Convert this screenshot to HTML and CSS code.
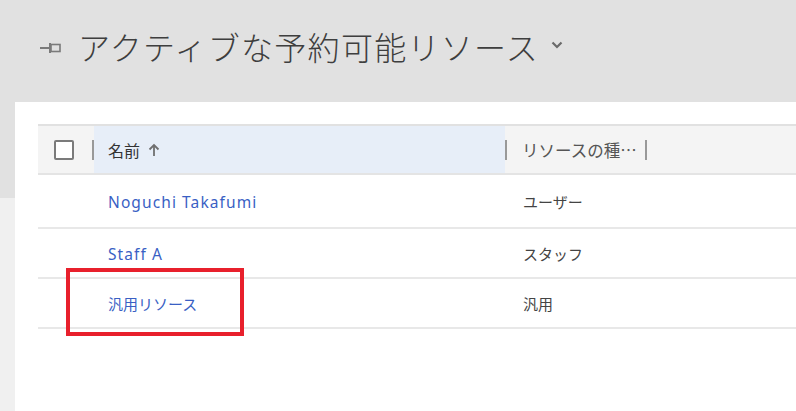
FILE: index.html
```html
<!DOCTYPE html>
<html lang="ja">
<head>
<meta charset="utf-8">
<link rel="stylesheet" href="styles.css">
</head>
<body>
<div class="page">
  <header class="titlebar">
    <svg class="pin" width="26" height="14" viewBox="0 0 26 14">
      <line x1="2" y1="7" x2="11" y2="7" stroke="#7a7a7a" stroke-width="2"/>
      <line x1="12" y1="2" x2="12" y2="12" stroke="#7a7a7a" stroke-width="2"/>
      <rect x="13" y="3.5" width="9" height="7" fill="none" stroke="#7a7a7a" stroke-width="1.6"/>
    </svg>
    <h1 class="title">アクティブな予約可能リソース</h1>
    <svg class="chev" width="12" height="8" viewBox="0 0 12 8">
      <polyline points="1.5,1.5 6,6 10.5,1.5" fill="none" stroke="#6a6a6a" stroke-width="2.2"/>
    </svg>
  </header>
  <div class="body">
    <div class="side"></div>
    <main class="panel">
      <div class="grid">
        <div class="row head">
          <div class="c-check"><span class="box"></span><span class="sep"></span></div>
          <div class="c-name">名前
            <svg class="arrow" width="12" height="14" viewBox="0 0 12 14">
              <line x1="6" y1="2" x2="6" y2="13" stroke="#6f6f6f" stroke-width="1.8"/>
              <polyline points="1.5,6.5 6,2 10.5,6.5" fill="none" stroke="#6f6f6f" stroke-width="1.8"/>
            </svg>
          </div>
          <div class="c-type"><span class="sep"></span><span class="htext">リソースの種…</span><span class="sep"></span></div>
        </div>
        <div class="row first">
          <div class="c-check"></div>
          <div class="c-name"><span class="link">Noguchi Takafumi</span></div>
          <div class="c-type"><span class="val">ユーザー</span></div>
        </div>
        <div class="row">
          <div class="c-check"></div>
          <div class="c-name"><span class="link">Staff A</span></div>
          <div class="c-type"><span class="val">スタッフ</span></div>
        </div>
        <div class="row">
          <div class="c-check"></div>
          <div class="c-name"><span class="link jp">汎用リソース</span></div>
          <div class="c-type"><span class="val">汎用</span></div>
        </div>
      </div>
      <div class="highlight"></div>
    </main>
  </div>
</div>
</body>
</html>
```

FILE: styles.css
```css
* { box-sizing: border-box; }
html, body { margin: 0; padding: 0; }
body {
  width: 796px;
  height: 411px;
  overflow: hidden;
  background: #ffffff;
  font-family: "Noto Sans", "Noto Sans CJK JP", sans-serif;
}
.page { width: 796px; height: 411px; display: flex; flex-direction: column; }
.titlebar {
  height: 102px;
  background: #e1e1e1;
  display: flex;
  align-items: center;
  padding-left: 38px;
  padding-bottom: 10px;
}
.pin { margin-top: 4px; }
.title {
  margin: 0 0 0 14px;
  font-family: "Noto Sans CJK JP", sans-serif;
  font-weight: 300;
  font-size: 32px;
  color: #3e3e3e;
  letter-spacing: 1.3px;
  line-height: 40px;
}
.chev { margin-left: 12px; margin-top: -2px; }
.body { flex: 1; display: flex; }
.side {
  width: 15px;
  background: linear-gradient(#e1e1e1 0, #e1e1e1 96px, #f0f0f0 96px);
}
.panel {
  flex: 1;
  background: #ffffff;
  padding: 22px 0 0 23px;
  position: relative;
}
.grid { display: flex; flex-direction: column; }
.row {
  display: flex;
  height: 50px;
  border-bottom: 2px solid #e8e8e8;
  font-size: 15px;
}
.row.first { height: 54px; }
.row.head {
  height: 51px;
  border-top: 2px solid #e1e1e1;
  border-bottom: 2px solid #e4e4e4;
  background: #f4f4f4;
}
.c-check {
  width: 56px;
  display: flex;
  align-items: center;
  padding-left: 16px;
}
.box {
  width: 20px;
  height: 20px;
  border: 2px solid #7b7b7b;
  border-radius: 2px;
  background: #fff;
}
.sep {
  display: inline-block;
  width: 2px;
  height: 20px;
  background: #999;
}
.c-check .sep { margin-left: 18px; }
.c-name {
  width: 411px;
  display: flex;
  align-items: center;
  padding-left: 14px;
  color: #333;
}
.head .c-name {
  background: #e7eef8;
  font-family: "Noto Sans CJK JP", sans-serif;
  font-size: 16px;
}
.arrow { margin-left: 8px; margin-top: 1px; }
.c-type {
  flex: 1;
  display: flex;
  align-items: center;
  color: #444;
}
.head .c-type {
  font-family: "Noto Sans CJK JP", sans-serif;
  font-size: 16.5px;
  color: #555;
}
.htext { margin-left: 15px; margin-right: 8px; }
.link {
  color: #3a5fc4;
  font-size: 15.5px;
  letter-spacing: 1.1px;
  padding-top: 2px;
}
.link.jp {
  font-family: "Noto Sans CJK JP", sans-serif;
  font-size: 15px;
  letter-spacing: 0;
  padding-top: 0;
}
.val {
  margin-left: 18px;
  font-family: "Noto Sans CJK JP", sans-serif;
  color: #444;
}
.highlight {
  position: absolute;
  left: 51px;
  top: 166px;
  width: 178px;
  height: 68px;
  border: 4.5px solid #e8202c;
}
```
